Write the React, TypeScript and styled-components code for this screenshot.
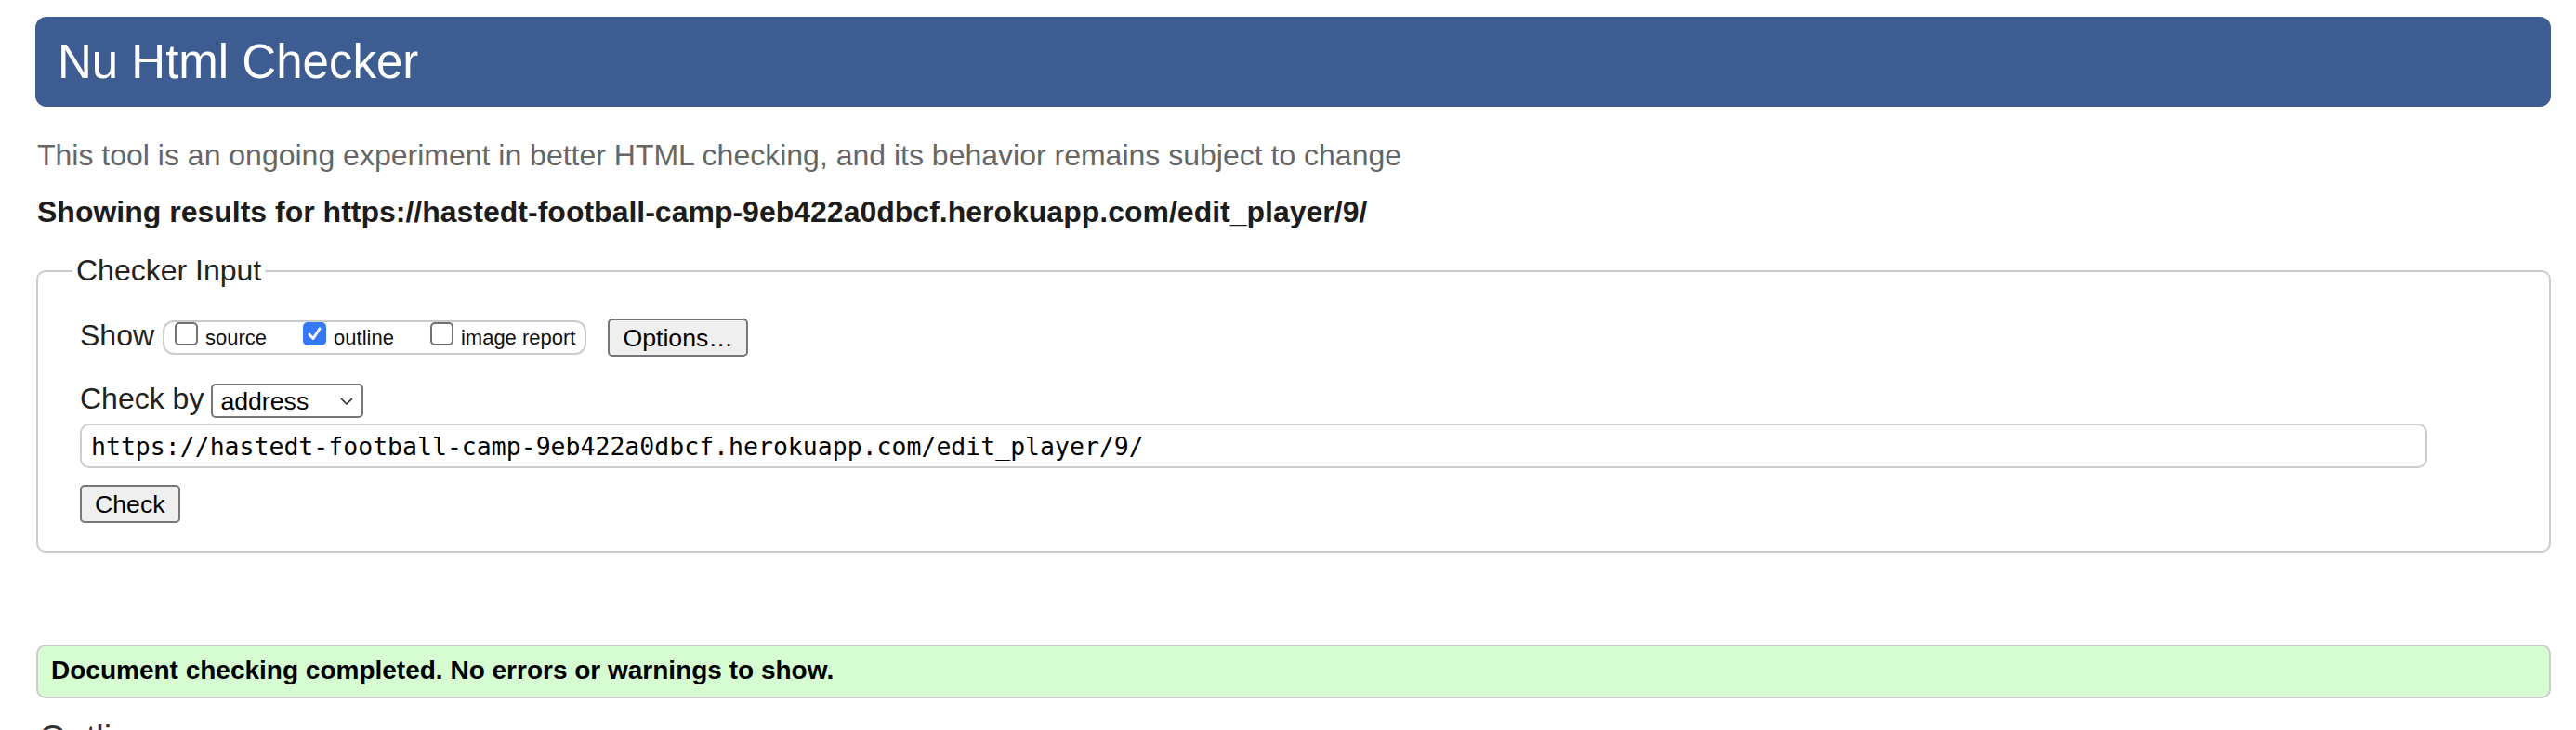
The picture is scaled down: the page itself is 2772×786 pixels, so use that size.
import React from "react";
import styled, { createGlobalStyle } from "styled-components";

const GlobalStyle = createGlobalStyle`
  html, body {
    margin: 0;
    padding: 0;
    overflow: hidden;
    background: #ffffff;
  }
  body {
    font-family: "Liberation Sans", Arial, Helvetica, sans-serif;
    color: #222222;
  }
`;

const Page = styled.main`
  display: flex;
  flex-direction: column;
  padding: 18px 27px 0 38px;
`;

const Banner = styled.h1`
  margin: 0;
  height: 97px;
  padding: 0 24px;
  background: #3d5c91;
  color: #ffffff;
  border-radius: 12px;
  font-weight: normal;
  font-size: 51px;
  line-height: 97px;
`;

const About = styled.p`
  margin: 34px 0 0 2px;
  font-size: 32px;
  line-height: 37px;
  color: #666666;
`;

const Results = styled.p`
  margin: 24px 0 0 2px;
  font-size: 32px;
  line-height: 37px;
  font-weight: bold;
  color: #1c1c1c;
`;

const Fieldset = styled.fieldset`
  margin: 26px 0 0 1px;
  padding: 33px 45px 30px 45px;
  border: 2px solid #cccccc;
  border-radius: 10px;
  min-width: 0;
`;

const Legend = styled.legend`
  font-size: 32px;
  line-height: 37px;
  padding: 0 4px;
  margin-left: -8px;
  color: #222222;
`;

const Row = styled.div<{ $top: number; $height: number }>`
  display: flex;
  align-items: center;
  margin-top: ${(p) => p.$top}px;
  height: ${(p) => p.$height}px;
`;

const RowLabel = styled.span<{ $gap: number }>`
  font-size: 32px;
  line-height: 37px;
  padding-bottom: 4px;
  margin-right: ${(p) => p.$gap}px;
  color: #222222;
`;

const ToggleGroup = styled.div`
  display: flex;
  align-items: center;
  gap: 39px;
  height: 37px;
  box-sizing: border-box;
  padding: 0 10px 0 11px;
  border: 2px solid #cccccc;
  border-radius: 12px;
`;

const Toggle = styled.label`
  display: flex;
  align-items: center;
  gap: 8px;
  font-size: 22px;
  line-height: 25px;
  color: #111111;
`;

const Box = styled.span<{ $checked?: boolean }>`
  display: flex;
  align-items: center;
  justify-content: center;
  width: 25px;
  height: 25px;
  box-sizing: border-box;
  margin-bottom: 9px;
  border-radius: 5px;
  border: ${(p) => (p.$checked ? "none" : "2px solid #727272")};
  background: ${(p) => (p.$checked ? "#3478f6" : "#ffffff")};
`;

const Button = styled.button<{ $left?: number }>`
  height: 41px;
  margin-left: ${(p) => p.$left ?? 0}px;
  padding: 0 14px;
  box-sizing: border-box;
  border: 2px solid #767676;
  border-radius: 5px;
  background: #efefef;
  color: #000000;
  font-family: "Liberation Sans", Arial, sans-serif;
  font-size: 26.67px;
  line-height: 30px;
`;

const SelectBox = styled.div`
  display: flex;
  align-items: center;
  justify-content: space-between;
  width: 164px;
  height: 37px;
  box-sizing: border-box;
  padding: 0 9px 0 8px;
  border: 2px solid #767676;
  border-radius: 5px;
  background: #ffffff;
  font-size: 26.67px;
  line-height: 30px;
  color: #000000;
`;

const UrlField = styled.div`
  display: flex;
  align-items: center;
  width: calc(100% - 86px);
  height: 48px;
  box-sizing: border-box;
  padding: 0 10px;
  border: 2px solid #cccccc;
  border-radius: 10px;
  font-family: "DejaVu Sans Mono", "Liberation Mono", monospace;
  font-size: 26.5px;
  color: #000000;
  white-space: nowrap;
`;

const Success = styled.div`
  margin: 99px 0 0 1px;
  padding: 10px 14px 12px;
  border: 2px solid #cccccc;
  border-radius: 10px;
  background: #d6fcd2;
  font-size: 28px;
  line-height: 32px;
  font-weight: bold;
  color: #000000;
`;

const Outline = styled.h2`
  margin: 21px 0 0 4px;
  font-size: 38px;
  line-height: 44px;
  font-weight: normal;
  color: #333333;
`;

const Check = () => (
  <svg width="17" height="17" viewBox="0 0 17 17" aria-hidden="true">
    <path
      d="M3 9.2 L7 13.5 L14 3"
      fill="none"
      stroke="#ffffff"
      strokeWidth="3"
      strokeLinecap="round"
      strokeLinejoin="round"
    />
  </svg>
);

const Chevron = () => (
  <svg width="14" height="8" viewBox="0 0 14 8" aria-hidden="true">
    <path d="M1 1 L7 7 L13 1" fill="none" stroke="#222222" strokeWidth="1.5" />
  </svg>
);

const URL = "https://hastedt-football-camp-9eb422a0dbcf.herokuapp.com/edit_player/9/";

const options = [
  { name: "source", checked: false },
  { name: "outline", checked: true },
  { name: "image report", checked: false },
];

export default function App() {
  return (
    <>
      <GlobalStyle />
      <Page>
        <Banner>Nu Html Checker</Banner>
        <About>
          This tool is an ongoing experiment in better HTML checking, and its behavior remains
          subject to change
        </About>
        <Results>Showing results for {URL}</Results>
        <Fieldset>
          <Legend>Checker Input</Legend>
          <Row $top={0} $height={41}>
            <RowLabel $gap={9}>Show</RowLabel>
            <ToggleGroup>
              {options.map((o) => (
                <Toggle key={o.name}>
                  <Box $checked={o.checked}>{o.checked && <Check />}</Box>
                  {o.name}
                </Toggle>
              ))}
            </ToggleGroup>
            <Button $left={23}>Options…</Button>
          </Row>
          <Row $top={29} $height={37}>
            <RowLabel $gap={8}>Check by</RowLabel>
            <SelectBox>
              <span>address</span>
              <Chevron />
            </SelectBox>
          </Row>
          <Row $top={6} $height={48}>
            <UrlField>{URL}</UrlField>
          </Row>
          <Row $top={18} $height={41}>
            <Button>Check</Button>
          </Row>
        </Fieldset>
        <Success>Document checking completed. No errors or warnings to show.</Success>
        <Outline>Outline</Outline>
      </Page>
    </>
  );
}
